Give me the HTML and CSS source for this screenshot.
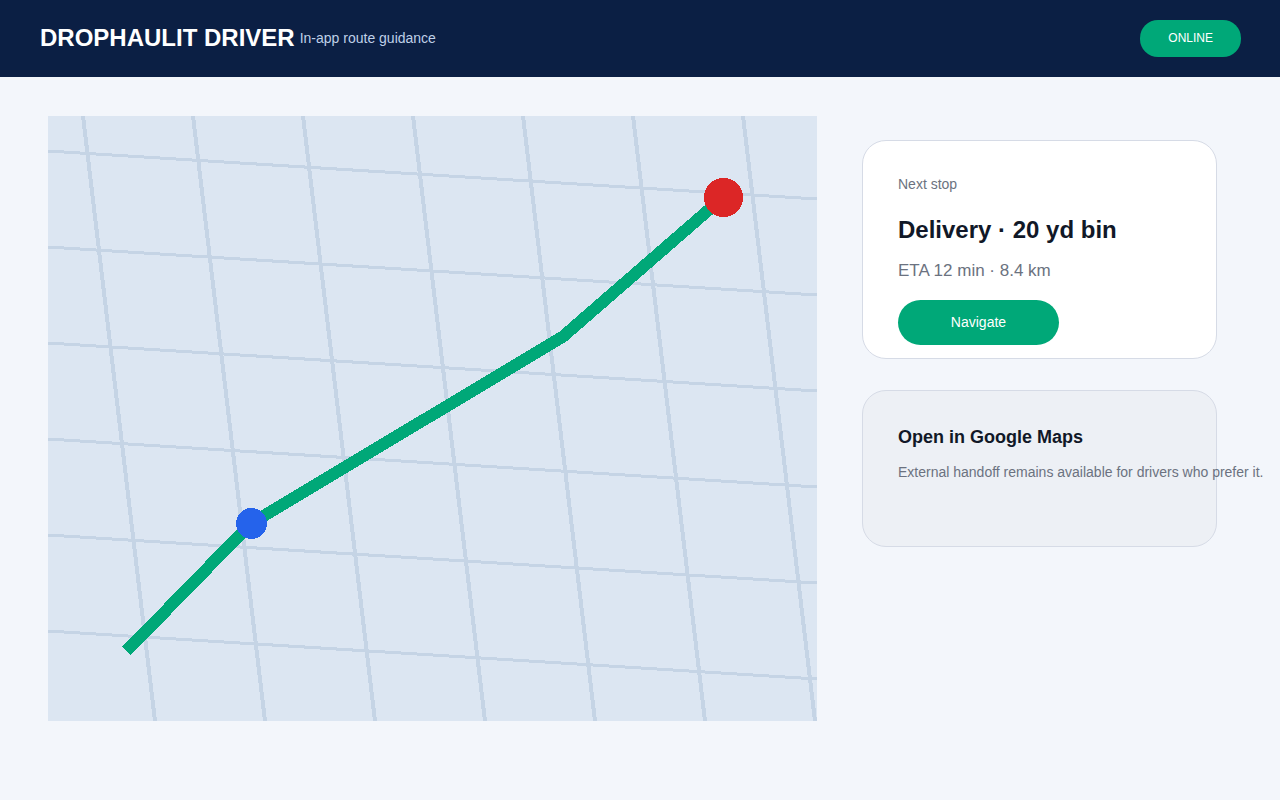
FILE: index.html
```html
<!DOCTYPE html>
<html lang="en">
<head>
    <meta charset="UTF-8">
    <meta name="viewport" content="width=device-width, initial-scale=1.0">
    <title>DropHaulIt Driver</title>
    <link rel="stylesheet" href="styles.css">
</head>
<body>

<header class="topbar">
    <div class="brand">
        <h1>DROPHAULIT DRIVER</h1>
        <span class="tagline">In-app route guidance</span>
    </div>
    <button type="button" class="status">ONLINE</button>
</header>

<main class="content">
    <svg class="map" viewBox="0 0 769 605" role="img" aria-label="Route map">
        <!-- streets -->
        <g class="street">
            <path d="M0 35L769 83M0 131L769 179M0 227L769 275M0 323L769 371M0 419L769 467M0 515L769 563"/>
        </g>
        <g class="street wide">
            <path d="M35 0L107 605M145 0L217 605M255 0L327 605M365 0L437 605M475 0L547 605M585 0L657 605M695 0L767 605"/>
        </g>
        <!-- route -->
        <polyline class="route" points="78.5,535 203,407.5 515,220.5 675,81.5"/>
        <circle class="driver" cx="203.5" cy="407.5" r="15.5"/>
        <circle class="stop" cx="675.5" cy="81.5" r="19.5"/>
    </svg>

    <aside class="side">
        <section class="card">
            <p class="small">Next stop</p>
            <h2>Delivery · 20 yd bin</h2>
            <p class="eta">ETA 12 min · 8.4 km</p>
            <button type="button" class="navigate">Navigate</button>
        </section>
        <section class="card muted">
            <h3>Open in Google Maps</h3>
            <p class="small">External handoff remains available for drivers who prefer it.</p>
        </section>
    </aside>
</main>

</body>
</html>
```
FILE: styles.css
```css
* {
    box-sizing: border-box;
}
body {
    margin: 0;
    font-family: "Liberation Sans", Arial, sans-serif;
    background-color: #f3f6fb;
    color: #111827;
}
h1, h2, h3, p {
    margin: 0;
}
button {
    border: none;
    font-family: inherit;
    color: #fff;
    background-color: #00a878;
    cursor: pointer;
}
.topbar {
    display: flex;
    justify-content: space-between;
    align-items: center;
    padding: 20px 39px 20px 40px;
    background-color: #0b1f44;
}
.brand {
    display: flex;
    align-items: center;
    gap: 5px;
    padding-bottom: 2px;
}
h1 {
    font-size: 24px;
    line-height: 28px;
    color: #fff;
}
.tagline {
    font-size: 14px;
    color: #bfd0e8;
}
.status {
    padding: 0 28px;
    font-size: 12px;
    line-height: 37px;
    border-radius: 18px;
}
.content {
    display: grid;
    grid-template-columns: minmax(0, 1fr) 355px;
    gap: 45px;
    align-items: start;
    padding: 39px 63px 39px 48px;
}
.map {
    display: block;
    width: 100%;
    background-color: #dce6f2;
    shape-rendering: crispEdges;
}
.street {
    stroke: #c5d4e5;
    stroke-width: 3;
}
.wide {
    stroke-width: 4;
}
.route {
    fill: none;
    stroke: #00a878;
    stroke-width: 12;
}
.driver {
    fill: #2563eb;
}
.stop {
    fill: #dc2626;
}
.side {
    display: flex;
    flex-direction: column;
    gap: 31px;
    padding-top: 24px;
}
.card {
    padding: 33px 35px 13px;
    background-color: #fff;
    border: 1px solid #d6dbe6;
    border-radius: 24px;
}
.muted {
    padding-top: 35px;
    padding-bottom: 64px;
    background-color: #edf0f5;
}
.small {
    font-size: 14px;
    line-height: 20px;
    color: #6b7280;
    white-space: nowrap;
}
h2 {
    margin-top: 22px;
    font-size: 24px;
    line-height: 28px;
}
.eta {
    margin-top: 17px;
    font-size: 17px;
    line-height: 20px;
    color: #6b7280;
}
.navigate {
    display: block;
    width: 161px;
    margin-top: 19px;
    padding: 0;
    font-size: 14px;
    line-height: 45px;
    border-radius: 23px;
}
h3 {
    margin-bottom: 14px;
    font-size: 18px;
    line-height: 22px;
}
```
